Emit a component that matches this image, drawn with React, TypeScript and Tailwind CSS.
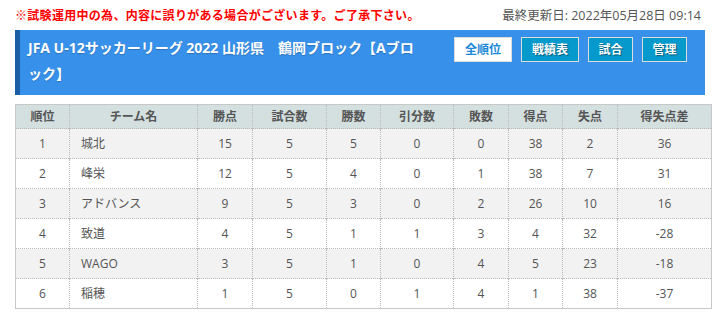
const rows = [
  { rank: 1, team: '城北', pts: 15, played: 5, win: 5, draw: 0, lose: 0, gf: 38, ga: 2, diff: '36' },
  { rank: 2, team: '峰栄', pts: 12, played: 5, win: 4, draw: 0, lose: 1, gf: 38, ga: 7, diff: '31' },
  { rank: 3, team: 'アドバンス', pts: 9, played: 5, win: 3, draw: 0, lose: 2, gf: 26, ga: 10, diff: '16' },
  { rank: 4, team: '致道', pts: 4, played: 5, win: 1, draw: 1, lose: 3, gf: 4, ga: 32, diff: '-28' },
  { rank: 5, team: 'WAGO', pts: 3, played: 5, win: 1, draw: 0, lose: 4, gf: 5, ga: 23, diff: '-18' },
  { rank: 6, team: '稲穂', pts: 1, played: 5, win: 0, draw: 1, lose: 4, gf: 1, ga: 38, diff: '-37' },
];

const heads = ['順位', 'チーム名', '勝点', '試合数', '勝数', '引分数', '敗数', '得点', '失点', '得失点差'];
const widths = [54, 128, 55, 74, 54, 73, 55, 54, 55, 94];

export default function App() {
  return (
    <div className="w-[720px] h-[317px] bg-white px-[15px] font-['Open_Sans','Noto_Sans_CJK_JP',sans-serif] overflow-hidden">
      <div className="h-[30px] flex items-start justify-between pt-[7px]">
        <p className="text-[12px] leading-[18px] font-bold text-[#ff0000] tracking-[0.3px]">
          ※試験運用中の為、内容に誤りがある場合がございます。ご了承下さい。
        </p>
        <p className="text-[12.5px] leading-[18px] text-[#555] pr-[4px]">最終更新日: 2022年05月28日 09:14</p>
      </div>

      <div className="h-[65px] flex justify-between bg-[#3790ea] border-l-[5px] border-[#1b5ea6] pl-[8px] pr-[18px]">
        <h1 className="w-[420px] pt-[5px] text-[14px] leading-[26px] font-bold text-white [text-shadow:0_1px_1px_rgba(0,0,0,0.2)]">
          JFA U-12サッカーリーグ 2022 山形県　鶴岡ブロック【Aブロ
          <br />
          ック】
        </h1>
        <div className="flex gap-[9px] pt-[7px] h-fit">
          {['全順位', '戦績表', '試合', '管理'].map((b, i) => (
            <span
              key={b}
              className={`h-[25px] flex items-center justify-center border border-[#dcdcdc] text-[12px] font-bold ${
                b.length === 3 ? 'w-[58px]' : 'w-[45px]'
              } ${
                i === 0 ? 'bg-white text-[#1a88d6]' : 'bg-[#0599cc] text-white [text-shadow:1px_1px_1px_rgba(0,0,0,0.4)]'
              }`}
            >
              {b}
            </span>
          ))}
        </div>
      </div>

      <table className="mt-[9px] w-[696px] table-fixed border-collapse text-[12px] text-[#555] border border-[#c8c8c8]">
        <colgroup>
          {widths.map((w, i) => (
            <col key={i} style={{ width: w }} />
          ))}
        </colgroup>
        <thead>
          <tr className="h-[24px] bg-[#d4dfe0]">
            {heads.map((h) => (
              <th key={h} className="font-bold text-[#555] border-l border-dotted border-[#bbb] first:border-l-0 p-0">
                {h}
              </th>
            ))}
          </tr>
        </thead>
        <tbody>
          {rows.map((r, i) => {
            const cells = [r.rank, r.team, r.pts, r.played, r.win, r.draw, r.lose, r.gf, r.ga, r.diff];
            return (
              <tr key={r.rank} className={`h-[30px] ${i % 2 === 0 ? 'bg-[#f2f2f2]' : 'bg-white'}`}>
                {cells.map((c, j) => (
                  <td
                    key={j}
                    className={`p-0 border-t border-l border-dotted border-[#bbb] first:border-l-0 ${
                      j === 1 ? 'text-left pl-[11px]' : 'text-center'
                    }`}
                  >
                    {c}
                  </td>
                ))}
              </tr>
            );
          })}
        </tbody>
      </table>
    </div>
  );
}
